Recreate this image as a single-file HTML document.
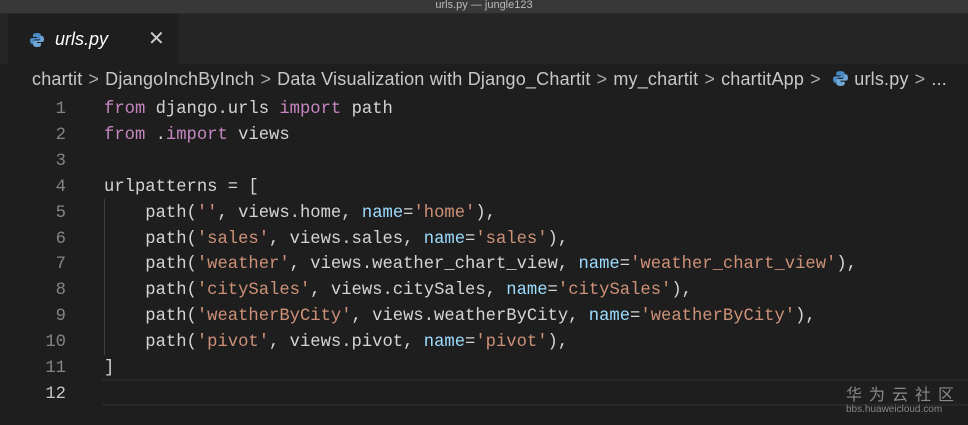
<!DOCTYPE html>
<html><head><meta charset="utf-8"><style>
html,body{margin:0;width:968px;height:425px;background:#1e1e1e;overflow:hidden;position:relative;font-family:"Liberation Sans",sans-serif}
.title{position:absolute;left:0;top:0;width:968px;height:13px;background:#383838;border-bottom:1px solid #2a2a2a;color:#bbb;font-size:11px;line-height:11px;text-align:center}
.tabs{position:absolute;left:0;top:14px;width:968px;height:50px;background:#252526}
.tab{position:absolute;left:8px;top:0;width:170px;height:50px;background:#1e1e1e}
.tab .n{position:absolute;left:47px;top:15px;color:#fff;font-style:italic;font-size:18px}
.tab .x{position:absolute;left:140px;top:12px;color:#ccc;font-size:20px}
.bc{position:absolute;left:32px;top:69px;color:#c8c8c8;font-size:18px;white-space:nowrap;letter-spacing:0.2px}
.bc .s{color:#aaa;margin:0 6px}
.code{position:absolute;left:0;top:97px;font-family:"Liberation Mono",monospace;font-size:17.2px;line-height:25.9px;color:#d4d4d4;white-space:pre}
.ln{position:absolute;left:0;width:66px;text-align:right;color:#858585}
.tx{position:absolute;left:104px}
.k{color:#c586c0}.s2{color:#ce9178}.p{color:#9cdcfe}
.g{position:absolute;left:104px;top:199px;width:1px;height:156px;background:#404040}
.cur{position:absolute;left:102px;top:379px;width:866px;height:23px;border-top:2px solid #282828;border-bottom:2px solid #282828}
.wm{position:absolute;left:846px;top:384px;color:#8a8a8a;font-family:"Noto Sans CJK SC",sans-serif;font-size:16px;line-height:18px;letter-spacing:7px}
.wm2{position:absolute;left:846px;top:404px;color:#888;font-size:10px}
</style></head><body>
<div class="title">urls.py — jungle123</div>
<div class="tabs"><div class="tab">
<svg style="position:absolute;left:21px;top:18px" width="16" height="16" viewBox="0 0 16 16"><path d="M8 1C4 1 4 2.5 4 3.5V5h4v1H3C1 6 1 8 1 9s.5 3 2 3h1.5v-2c0-1.5 1-2.5 2.5-2.5h3c1 0 2-1 2-2V3.5C12 2 10.5 1 8 1z" fill="#4a8bc4"/><path d="M8 15c4 0 4-1.5 4-2.5V11H8v-1h5c2 0 2-2 2-3s-.5-3-2-3h-1.5v2c0 1.5-1 2.5-2.5 2.5H6c-1 0-2 1-2 2v2c0 1.5 1.5 2.5 4 2.5z" fill="#6fa8d6"/></svg>
<span class="n">urls.py</span><span class="x">✕</span></div></div>
<div class="bc">chartit<span class="s">&gt;</span>DjangoInchByInch<span class="s">&gt;</span>Data Visualization with Django_Chartit<span class="s">&gt;</span>my_chartit<span class="s">&gt;</span>chartitApp<span class="s">&gt;</span> <svg width="17" height="17" viewBox="0 0 16 16" style="vertical-align:-2px"><path d="M8 1C4 1 4 2.5 4 3.5V5h4v1H3C1 6 1 8 1 9s.5 3 2 3h1.5v-2c0-1.5 1-2.5 2.5-2.5h3c1 0 2-1 2-2V3.5C12 2 10.5 1 8 1z" fill="#4a8bc4"/><path d="M8 15c4 0 4-1.5 4-2.5V11H8v-1h5c2 0 2-2 2-3s-.5-3-2-3h-1.5v2c0 1.5-1 2.5-2.5 2.5H6c-1 0-2 1-2 2v2c0 1.5 1.5 2.5 4 2.5z" fill="#6fa8d6"/></svg> urls.py<span class="s">&gt;</span>...</div>
<div class="cur"></div>
<div class="g"></div>
<div class="code">
<div class="ln" style="top:0">1</div><div class="tx" style="top:0"><span class="k">from</span> django.urls <span class="k">import</span> path</div>
<div class="ln" style="top:25.9px">2</div><div class="tx" style="top:25.9px"><span class="k">from</span> .<span class="k">import</span> views</div>
<div class="ln" style="top:51.8px">3</div>
<div class="ln" style="top:77.7px">4</div><div class="tx" style="top:77.7px">urlpatterns = [</div>
<div class="ln" style="top:103.6px">5</div><div class="tx" style="top:103.6px">    path(<span class="s2">''</span>, views.home, <span class="p">name</span>=<span class="s2">'home'</span>),</div>
<div class="ln" style="top:129.5px">6</div><div class="tx" style="top:129.5px">    path(<span class="s2">'sales'</span>, views.sales, <span class="p">name</span>=<span class="s2">'sales'</span>),</div>
<div class="ln" style="top:155.4px">7</div><div class="tx" style="top:155.4px">    path(<span class="s2">'weather'</span>, views.weather_chart_view, <span class="p">name</span>=<span class="s2">'weather_chart_view'</span>),</div>
<div class="ln" style="top:181.3px">8</div><div class="tx" style="top:181.3px">    path(<span class="s2">'citySales'</span>, views.citySales, <span class="p">name</span>=<span class="s2">'citySales'</span>),</div>
<div class="ln" style="top:207.2px">9</div><div class="tx" style="top:207.2px">    path(<span class="s2">'weatherByCity'</span>, views.weatherByCity, <span class="p">name</span>=<span class="s2">'weatherByCity'</span>),</div>
<div class="ln" style="top:233.1px">10</div><div class="tx" style="top:233.1px">    path(<span class="s2">'pivot'</span>, views.pivot, <span class="p">name</span>=<span class="s2">'pivot'</span>),</div>
<div class="ln" style="top:259px">11</div><div class="tx" style="top:259px">]</div>
<div class="ln" style="top:284.9px;color:#c6c6c6">12</div>
</div>
<div class="wm">华为云社区</div>
<div class="wm2">bbs.huaweicloud.com</div>
</body></html>
